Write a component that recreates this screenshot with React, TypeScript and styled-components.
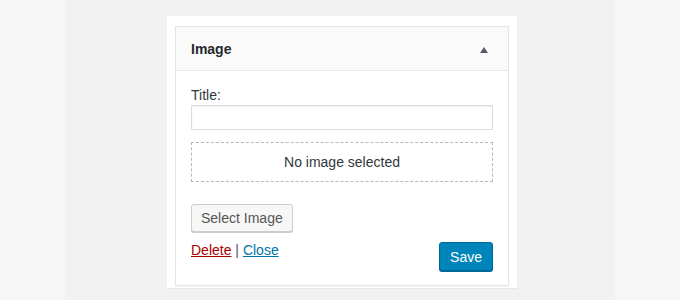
import React from "react";
import styled, { createGlobalStyle } from "styled-components";

const Global = createGlobalStyle`
  html, body { margin: 0; padding: 0; }
  body {
    background: #f6f6f6;
    font-family: "Liberation Sans", Arial, sans-serif;
    color: #23282d;
  }
`;

const Page = styled.div`
  width: 680px;
  height: 300px;
  display: flex;
  justify-content: center;
  overflow: hidden;
`;

const Column = styled.div`
  width: 550px;
  background: #f1f1f1;
  display: flex;
  justify-content: center;
  padding-top: 16px;
  padding-left: 4px;
  box-sizing: border-box;
`;

const Panel = styled.div`
  width: 334px;
  height: 262px;
  background: #fff;
  padding: 10px 8px 0 8px;
  box-shadow: 0 1px 1px rgba(0, 0, 0, 0.04);
`;

const Widget = styled.div`
  border: 1px solid #e5e5e5;
  box-shadow: 0 1px 1px rgba(0, 0, 0, 0.04);
  background: #fff;
  display: flex;
  flex-direction: column;
`;

const Header = styled.div`
  height: 43px;
  background: #fafafa;
  border-bottom: 1px solid #e8e8e8;
  display: flex;
  align-items: center;
  justify-content: space-between;
  padding: 0 20px 0 15px;
`;

const HeaderTitle = styled.h3`
  margin: 0;
  font-size: 14px;
  font-weight: 700;
  color: #23282d;
`;

const Arrow = styled.span`
  width: 0;
  height: 0;
  border-left: 4px solid transparent;
  border-right: 4px solid transparent;
  border-bottom: 6px solid #555d66;
  margin-top: 2px;
`;

const Body = styled.div`
  padding: 15px 15px 14px 15px;
  display: flex;
  flex-direction: column;
`;

const Label = styled.label`
  font-size: 14px;
  color: #32373c;
  line-height: 18px;
  margin-bottom: 1px;
`;

const Input = styled.input`
  box-sizing: border-box;
  height: 25px;
  width: 100%;
  border: 1px solid #ddd;
  box-shadow: inset 0 1px 2px rgba(0, 0, 0, 0.07);
  margin: 0 0 12px 0;
  padding: 2px 6px;
  font-family: inherit;
  font-size: 14px;
`;

const Placeholder = styled.div`
  box-sizing: border-box;
  height: 40px;
  border: 1px dashed #b4b9be;
  display: flex;
  align-items: center;
  justify-content: center;
  font-size: 14px;
  color: #32373c;
  margin-bottom: 22px;
`;

const Button = styled.button<{ $primary?: boolean }>`
  box-sizing: border-box;
  height: ${(p) => (p.$primary ? "29px" : "28px")};
  padding: 0 ${(p) => (p.$primary ? "10px" : "9px")};
  font-family: inherit;
  font-size: 14px;
  border-radius: 3px;
  cursor: pointer;
  border: 1px solid ${(p) => (p.$primary ? "#006799" : "#cccccc")};
  background: ${(p) => (p.$primary ? "#0085ba" : "#f7f7f7")};
  color: ${(p) => (p.$primary ? "#ffffff" : "#555555")};
  box-shadow: ${(p) =>
    p.$primary ? "0 1px 0 #006799" : "0 1px 0 #cccccc"};
`;

const SelectRow = styled.div`
  display: flex;
`;

const Actions = styled.div`
  display: flex;
  justify-content: space-between;
  align-items: flex-start;
  margin-top: 10px;
`;

const Links = styled.div`
  font-size: 14px;
  color: #555;
  line-height: 18px;
  margin-top: -1px;
`;

const Link = styled.a<{ $danger?: boolean }>`
  color: ${(p) => (p.$danger ? "#a00" : "#0073aa")};
  text-decoration: underline;
`;

export default function App() {
  return (
    <>
      <Global />
      <Page>
        <Column>
          <Panel>
            <Widget>
              <Header>
                <HeaderTitle>Image</HeaderTitle>
                <Arrow />
              </Header>
              <Body>
                <Label>Title:</Label>
                <Input type="text" />
                <Placeholder>No image selected</Placeholder>
                <SelectRow>
                  <Button>Select Image</Button>
                </SelectRow>
                <Actions>
                  <Links>
                    <Link $danger href="#">Delete</Link> | <Link href="#">Close</Link>
                  </Links>
                  <Button $primary>Save</Button>
                </Actions>
              </Body>
            </Widget>
          </Panel>
        </Column>
      </Page>
    </>
  );
}
